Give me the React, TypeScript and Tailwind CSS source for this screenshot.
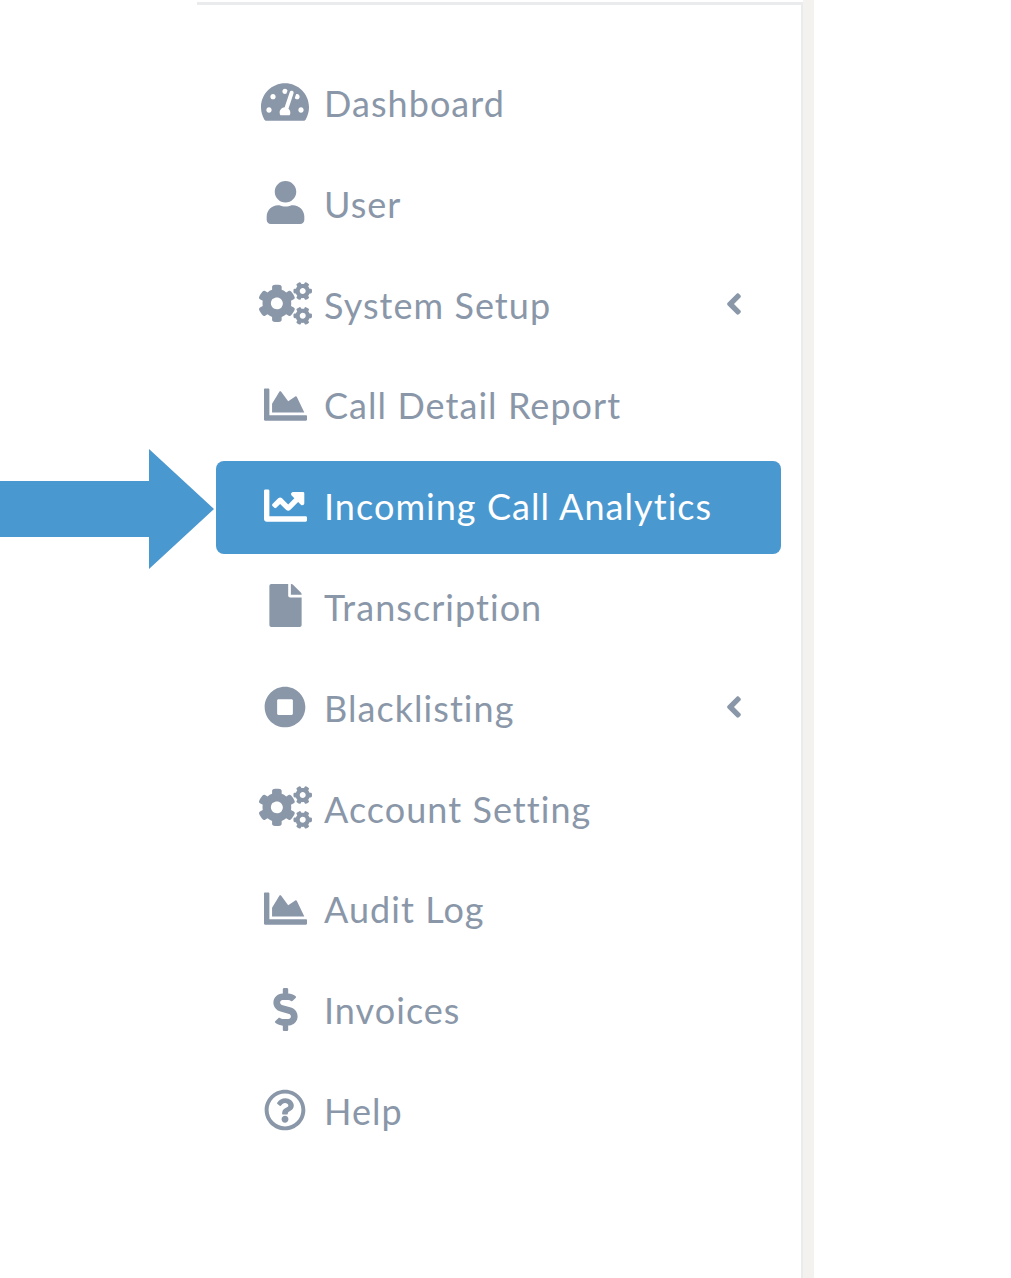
import type { IconType } from 'react-icons';
import {
  FaTachometerAlt,
  FaUser,
  FaCogs,
  FaChartArea,
  FaChartLine,
  FaFile,
  FaStopCircle,
  FaDollarSign,
  FaRegQuestionCircle,
  FaAngleLeft,
} from 'react-icons/fa';

type MenuItem = {
  label: string;
  Icon: IconType;
  iconClass: string;
  active?: boolean;
  hasChildren?: boolean;
};

const items: MenuItem[] = [
  { label: 'Dashboard', Icon: FaTachometerAlt, iconClass: 'w-[48px] h-[48px]' },
  { label: 'User', Icon: FaUser, iconClass: 'w-[43px] h-[43px]' },
  { label: 'System Setup', Icon: FaCogs, iconClass: 'w-[53px] h-[53px]', hasChildren: true },
  { label: 'Call Detail Report', Icon: FaChartArea, iconClass: 'w-[43px] h-[43px]' },
  { label: 'Incoming Call Analytics', Icon: FaChartLine, iconClass: 'w-[43px] h-[43px]', active: true },
  { label: 'Transcription', Icon: FaFile, iconClass: 'w-[43px] h-[43px]' },
  { label: 'Blacklisting', Icon: FaStopCircle, iconClass: 'w-[42px] h-[42px]', hasChildren: true },
  { label: 'Account Setting', Icon: FaCogs, iconClass: 'w-[53px] h-[53px]' },
  { label: 'Audit Log', Icon: FaChartArea, iconClass: 'w-[43px] h-[43px]' },
  { label: 'Invoices', Icon: FaDollarSign, iconClass: 'w-[43px] h-[43px]' },
  { label: 'Help', Icon: FaRegQuestionCircle, iconClass: 'w-[42px] h-[42px]' },
];

function NavRow({ item }: { item: MenuItem }) {
  const { label, Icon, iconClass, active, hasChildren } = item;
  return (
    <li
      className={`flex items-center h-[93px] mb-[7.8px] pl-[42px] pr-[30px] rounded-lg ${
        active ? 'bg-[#4a98d0] text-white' : 'text-[#8a97a9]'
      }`}
    >
      <span className="flex items-center justify-center w-[54px] shrink-0 mb-[5px]">
        <Icon className={iconClass} />
      </span>
      <span className="ml-[12px] mb-[3px] text-[36px] leading-none tracking-[1.05px]">{label}</span>
      {hasChildren && <FaAngleLeft className="ml-auto mb-[5px] w-[34px] h-[34px] text-[#8a97a9]" />}
    </li>
  );
}

export default function App() {
  return (
    <div className="relative flex h-[1278px] overflow-hidden bg-white font-['Lato','Noto_Sans',sans-serif]">
      <div className="w-[197px] shrink-0" />

      {/* Sidebar */}
      <aside className="w-[606px] shrink-0 border-t-[3px] border-r-[2px] border-[#e9ebed] mt-[2px] pt-[53px] pl-[19px] pr-[20px]">
        <ul>
          {items.map((item) => (
            <NavRow key={item.label} item={item} />
          ))}
        </ul>
      </aside>

      <div className="w-[11px] shrink-0 bg-[#f3f2ef]" />

      {/* Annotation arrow */}
      <svg
        className="absolute left-0 top-[449px]"
        width="214"
        height="120"
        viewBox="0 0 214 120"
        fill="#4a98d0"
      >
        <path d="M0 32H149V0L214 60L149 120V88H0Z" />
      </svg>
    </div>
  );
}
